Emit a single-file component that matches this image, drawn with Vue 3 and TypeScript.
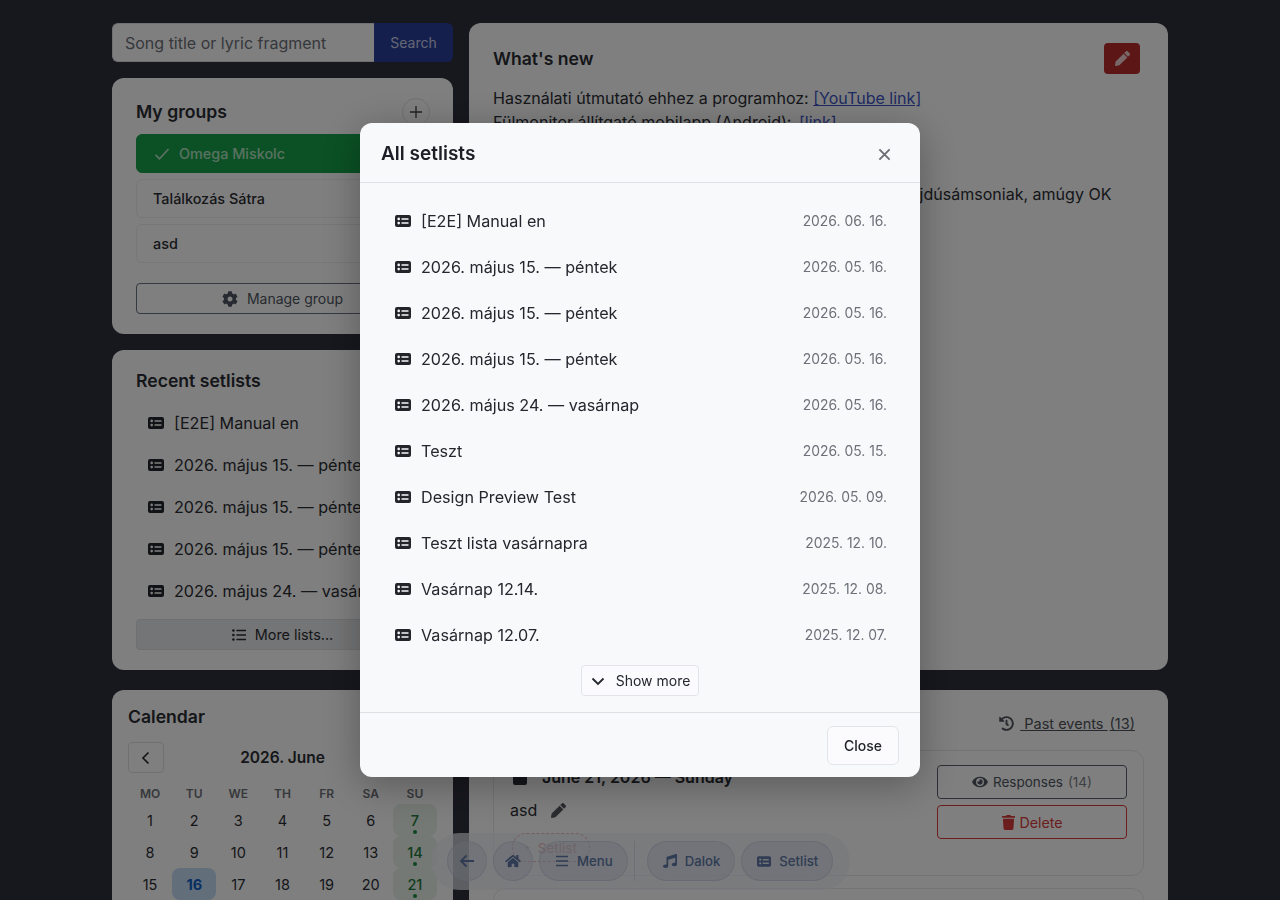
<script setup lang="ts">
const p = {
  pencil: 'M497.9 142.1l-46.1 46.1c-4.7 4.7-12.3 4.7-17 0l-111-111c-4.7-4.7-4.7-12.3 0-17l46.1-46.1c18.7-18.7 49.1-18.7 67.9 0l60.1 60.1c18.8 18.7 18.8 49.1 0 67.9zM284.2 99.8L21.6 362.4.4 483.9c-2.9 16.4 11.4 30.6 27.8 27.8l121.5-21.3 262.6-262.6c4.7-4.7 4.7-12.3 0-17l-111-111c-4.8-4.7-12.4-4.7-17.1 0z',
  cog: 'M487.4 315.7l-42.6-24.6c4.3-23.2 4.3-47 0-70.2l42.6-24.6c4.9-2.8 7.1-8.6 5.5-14-11.1-35.6-30-67.8-54.7-94.6-3.8-4.1-10-5.1-14.8-2.3L380.8 110c-17.9-15.4-38.5-27.3-60.8-35.1V25.8c0-5.6-3.9-10.5-9.4-11.7-36.7-8.2-74.3-7.8-109.2 0-5.5 1.2-9.4 6.1-9.4 11.7V75c-22.2 7.9-42.8 19.8-60.8 35.1L88.7 85.5c-4.9-2.8-11-1.9-14.8 2.3-24.7 26.7-43.6 58.9-54.7 94.6-1.7 5.4.6 11.2 5.5 14L67.3 221c-4.3 23.2-4.3 47 0 70.2l-42.6 24.6c-4.9 2.8-7.1 8.6-5.5 14 11.1 35.6 30 67.8 54.7 94.6 3.8 4.1 10 5.1 14.8 2.3l42.6-24.6c17.9 15.4 38.5 27.3 60.8 35.1v49.2c0 5.6 3.9 10.5 9.4 11.7 36.7 8.2 74.3 7.8 109.2 0 5.5-1.2 9.4-6.1 9.4-11.7v-49.2c22.2-7.9 42.8-19.8 60.8-35.1l42.6 24.6c4.9 2.8 11 1.9 14.8-2.3 24.7-26.7 43.6-58.9 54.7-94.6 1.5-5.5-.7-11.3-5.6-14.1zM256 336c-44.1 0-80-35.9-80-80s35.9-80 80-80 80 35.9 80 80-35.9 80-80 80z',
  home: 'M280.37 148.26L96 300.11V464a16 16 0 0 0 16 16l112.06-.29a16 16 0 0 0 15.92-16V368a16 16 0 0 1 16-16h64a16 16 0 0 1 16 16v95.64a16 16 0 0 0 16 16.05L464 480a16 16 0 0 0 16-16V300L295.67 148.26a12.19 12.19 0 0 0-15.3 0zM571.6 251.47L488 182.56V44.05a12 12 0 0 0-12-12h-56a12 12 0 0 0-12 12v72.61L318.47 43a48 48 0 0 0-61 0L4.34 251.47a12 12 0 0 0-1.6 16.9l25.5 31A12 12 0 0 0 45.15 301l235.22-193.74a12.19 12.19 0 0 1 15.3 0L530.9 301a12 12 0 0 0 16.9-1.6l25.5-31a12 12 0 0 0-1.7-16.93z',
  music: 'M470.38 1.51L150.41 96A32 32 0 0 0 128 126.51v261.41A139 139 0 0 0 96 384c-53 0-96 28.66-96 64s43 64 96 64 96-28.66 96-64V214.32l256-75v184.61a138.4 138.4 0 0 0-32-3.93c-53 0-96 28.66-96 64s43 64 96 64 96-28.65 96-64V32a32 32 0 0 0-41.62-30.49z',
  eye: 'M572.52 241.4C518.29 135.59 410.93 64 288 64S57.68 135.64 3.48 241.41a32.35 32.35 0 0 0 0 29.19C57.71 376.41 165.07 448 288 448s230.32-71.64 284.52-177.41a32.35 32.35 0 0 0 0-29.19zM288 400a144 144 0 1 1 144-144 143.93 143.93 0 0 1-144 144zm0-240a95.31 95.31 0 0 0-25.31 3.79 47.85 47.85 0 0 1-66.9 66.9A95.78 95.78 0 1 0 288 160z',
  trash: 'M432 32H312l-9.4-18.7A24 24 0 0 0 281.1 0H166.8a23.72 23.72 0 0 0-21.4 13.3L136 32H16A16 16 0 0 0 0 48v32a16 16 0 0 0 16 16h416a16 16 0 0 0 16-16V48a16 16 0 0 0-16-16zM53.2 467a48 48 0 0 0 47.9 45h245.8a48 48 0 0 0 47.9-45L416 128H32z',
  history: 'M504 255.531c.253 136.64-111.18 248.372-247.82 248.468-59.015.042-113.223-20.53-155.822-54.911-11.077-8.94-11.905-25.541-1.839-35.607l11.267-11.267c8.609-8.609 22.353-9.551 31.891-1.984C173.062 425.135 212.781 440 256 440c101.705 0 184-82.311 184-184 0-101.705-82.311-184-184-184-48.814 0-93.149 18.969-126.068 49.932l50.754 50.754c10.08 10.08 2.941 27.314-11.313 27.314H24c-8.837 0-16-7.163-16-16V38.627c0-14.254 17.234-21.393 27.314-11.314l49.372 49.372C129.209 34.136 189.552 8 256 8c136.81 0 247.747 110.78 248 247.531zm-180.912 78.784l9.823-12.63c8.138-10.463 6.253-25.542-4.21-33.679L288 256.349V152c0-13.255-10.745-24-24-24h-16c-13.255 0-24 10.745-24 24v135.651l65.409 50.874c10.463 8.137 25.541 6.253 33.679-4.21z',
  card: 'M2 0h12a2 2 0 0 1 2 2v8a2 2 0 0 1-2 2H2a2 2 0 0 1-2-2V2a2 2 0 0 1 2-2zM3.7 2.600a1.300 1.300 0 1 0 0 2.600 1.300 1.300 0 0 0 0-2.600zm0 4.200a1.300 1.300 0 1 0 0 2.600 1.300 1.300 0 0 0 0-2.600zM6.500 3.200v1.600h7V3.200zm0 4V8.800h7V7.200z',
}

const recent = ['[E2E] Manual en', '2026. május 15. — péntek', '2026. május 15. — péntek', '2026. május 15. — péntek', '2026. május 24. — vasárnap']

const setlists = [
  { name: '[E2E] Manual en', date: '2026. 06. 16.' },
  { name: '2026. május 15. — péntek', date: '2026. 05. 16.' },
  { name: '2026. május 15. — péntek', date: '2026. 05. 16.' },
  { name: '2026. május 15. — péntek', date: '2026. 05. 16.' },
  { name: '2026. május 24. — vasárnap', date: '2026. 05. 16.' },
  { name: 'Teszt', date: '2026. 05. 15.' },
  { name: 'Design Preview Test', date: '2026. 05. 09.' },
  { name: 'Teszt lista vasárnapra', date: '2025. 12. 10.' },
  { name: 'Vasárnap 12.14.', date: '2025. 12. 08.' },
  { name: 'Vasárnap 12.07.', date: '2025. 12. 07.' },
]

const weekdays = ['MO', 'TU', 'WE', 'TH', 'FR', 'SA', 'SU']
const days = Array.from({ length: 21 }, (_, i) => i + 1)
</script>

<template>
  <div class="page">
    <div class="layout">
      <aside class="col">
        <form class="search" @submit.prevent>
          <input class="search-input" placeholder="Song title or lyric fragment" />
          <button class="search-btn">Search</button>
        </form>

        <section class="card groups">
          <div class="groups-head">
            <h2>My groups</h2>
            <span class="round-plus">
              <svg width="14" height="14" viewBox="0 0 14 14"><path d="M7 1v12M1 7h12" stroke="currentColor" stroke-width="1.300" /></svg>
            </span>
          </div>
          <div class="group active">
            <svg width="18" height="18" viewBox="0 0 18 18" fill="none"><path d="M2.500 9.800l4 4L15.500 4" stroke="currentColor" stroke-width="1.700" /></svg>
            <span>Omega Miskolc</span>
          </div>
          <div class="group">Találkozás Sátra</div>
          <div class="group">asd</div>
          <button class="manage">
            <svg width="16" height="16" viewBox="0 0 512 512" fill="currentColor"><path :d="p.cog" /></svg>
            Manage group
          </button>
        </section>

        <section class="card recent">
          <h2>Recent setlists</h2>
          <div v-for="(r, i) in recent" :key="i" class="recent-row">
            <svg class="ic-card" viewBox="0 0 16 12" fill="currentColor"><path fill-rule="evenodd" :d="p.card" /></svg>
            <span>{{ r }}</span>
          </div>
          <button class="more">
            <svg width="14" height="14" viewBox="0 0 14 14" fill="currentColor"><circle cx="1.400" cy="2.500" r="1.300" /><circle cx="1.400" cy="7" r="1.300" /><circle cx="1.400" cy="11.500" r="1.300" /><path d="M4.400 1.800H14v1.400H4.400zM4.400 6.300H14v1.400H4.400zM4.400 10.800H14v1.400H4.400z" /></svg>
            More lists...
          </button>
        </section>

        <section class="card calendar">
          <h2>Calendar</h2>
          <div class="cal-head">
            <button class="cal-prev">
              <svg width="16" height="16" viewBox="0 0 16 16" fill="none"><path d="M10.500 2.500L5 8l5.500 5.500" stroke="currentColor" stroke-width="1.700" /></svg>
            </button>
            <strong>2026. June</strong>
            <span class="cal-prev-spacer"></span>
          </div>
          <div class="cal-grid">
            <span v-for="w in weekdays" :key="w" class="wd">{{ w }}</span>
            <span v-for="d in days" :key="d" class="day" :class="{ sun: d % 7 === 0, today: d === 16 }">{{ d }}<i v-if="d % 7 === 0"></i></span>
          </div>
        </section>
      </aside>

      <main class="col">
        <section class="card news">
          <div class="news-head">
            <h2>What's new</h2>
            <button class="edit">
              <svg width="15" height="15" viewBox="0 0 512 512" fill="currentColor"><path :d="p.pencil" /></svg>
            </button>
          </div>
          <p>
            Használati útmutató ehhez a programhoz: <a>[YouTube link]</a><br />
            Fülmonitor állítgató mobilapp (Android): <a class="link-2">[link]</a><br />
            <br />
            <br />
            Köszönet a sok visszajelzésért, a zenekarnak, főleg a hajdúsámsoniak, amúgy OK
          </p>
        </section>

        <section class="card events">
          <div class="events-head">
            <a class="past">
              <svg width="15" height="15" viewBox="0 0 512 512" fill="currentColor"><path :d="p.history" /></svg>
              <span class="past-label">&nbsp;Past events&nbsp;</span>
              <span class="past-count">(13)</span>
            </a>
          </div>
          <article class="event">
            <div class="event-main">
              <div class="event-title">
                <svg width="14" height="16" viewBox="0 0 14 16" fill="currentColor"><rect y="1" width="14" height="15" rx="2" /></svg>
                <strong>June 21, 2026 — Sunday</strong>
              </div>
              <div class="event-note">
                asd
                <svg width="15" height="15" viewBox="0 0 512 512" fill="currentColor"><path :d="p.pencil" /></svg>
              </div>
              <span class="add-setlist"><svg width="13" height="13" viewBox="0 0 13 13"><path d="M6.500 0v13M0 6.500h13" stroke="currentColor" stroke-width="1.200" /></svg>Setlist</span>
            </div>
            <div class="event-side">
              <button class="resp">
                <svg width="16" height="14" viewBox="0 0 576 512" fill="currentColor"><path :d="p.eye" /></svg>
                Responses <em>(14)</em>
              </button>
              <button class="del">
                <svg width="13" height="15" viewBox="0 0 448 512" fill="currentColor"><path :d="p.trash" /></svg>
                Delete
              </button>
            </div>
          </article>
          <article class="event"></article>
        </section>
      </main>
    </div>

    <nav class="dock">
      <button class="dock-btn circle"><svg width="16" height="14" viewBox="0 0 16 14" fill="none"><path d="M15 7H2M7.500 1.500L2 7l5.500 5.500" stroke="currentColor" stroke-width="1.800" /></svg></button>
      <button class="dock-btn circle"><svg width="16" height="14" viewBox="0 0 576 512" fill="currentColor"><path :d="p.home" /></svg></button>
      <button class="dock-btn"><svg width="14" height="12" viewBox="0 0 14 12" fill="currentColor"><path d="M1 .800h12v1.400H1zM1 5.300h12v1.400H1zM1 9.800h12v1.400H1z" /></svg>Menu</button>
      <span class="dock-sep"></span>
      <button class="dock-btn"><svg width="14" height="14" viewBox="0 0 512 512" fill="currentColor"><path :d="p.music" /></svg>Dalok</button>
      <button class="dock-btn"><svg width="14" height="11" viewBox="0 0 16 12" fill="currentColor"><path fill-rule="evenodd" :d="p.card" /></svg>Setlist</button>
    </nav>

    <div class="backdrop">
      <div class="modal">
        <header class="modal-head">
          <h3>All setlists</h3>
          <button class="close-x" aria-label="Close">
            <svg width="13" height="13" viewBox="0 0 14 14" fill="none"><path d="M1.500 1.500l11 11M12.500 1.500l-11 11" stroke="currentColor" stroke-width="2" /></svg>
          </button>
        </header>
        <div class="modal-body">
          <div class="list">
            <div v-for="(s, i) in setlists" :key="i" class="row">
              <svg class="ic-card" viewBox="0 0 16 12" fill="currentColor"><path fill-rule="evenodd" :d="p.card" /></svg>
              <span class="row-name">{{ s.name }}</span>
              <span class="row-date">{{ s.date }}</span>
            </div>
          </div>
          <button class="show-more">
            <svg width="16" height="16" viewBox="0 0 16 16" fill="none"><path d="M2.500 5.500L8 11l5.500-5.500" stroke="currentColor" stroke-width="1.800" /></svg>
            Show more
          </button>
        </div>
        <footer class="modal-foot">
          <button class="close-btn">Close</button>
        </footer>
      </div>
    </div>
  </div>
</template>

<style>
html, body { margin: 0; background: #2f303d; overflow: hidden; }
</style>

<style scoped>
* { box-sizing: border-box; }
button, input { font-family: inherit; }
.page { position: relative; height: 900px; overflow: hidden; background: #2f303d; font-family: Inter, "Liberation Sans", sans-serif; color: #2b2d33; }
.layout { width: 1056px; margin: 0 auto; padding-top: 23px; display: grid; grid-template-columns: 341px 699px; gap: 16px; }
.col { display: flex; flex-direction: column; }
h2 { margin: 0; font-size: 17.600px; font-weight: 600; color: #2a2c33; }
.card { background: #fff; border-radius: 12px; }

.search { display: flex; height: 39px; margin-bottom: 16px; }
.search-input { flex: 1; min-width: 0; border: 1px solid #e0e0e4; border-right: 0; border-radius: 6px 0 0 6px; background: #fff; padding: 0 12px; font-size: 16px; }
.search-input::placeholder { color: #6c7078; }
.search-btn { width: 79px; border: 0; border-radius: 0 6px 6px 0; background: #2a3f9c; color: #c9cfe8; font-size: 14px; }

.groups { height: 256px; padding: 24px; margin-bottom: 16px; }
.groups-head { display: flex; justify-content: space-between; align-items: center; height: 32px; margin-bottom: 6px; margin-right: -1px; margin-top: -6px; }
.groups-head h2 { margin-top: -1px; }
.round-plus { width: 28px; height: 28px; border: 1px solid #e3e3e6; border-radius: 50%; display: flex; align-items: center; justify-content: center; color: #40434a; }
.group { height: 39px; margin-bottom: 6px; padding: 0 16px; border: 1px solid #eceef0; border-radius: 6px; display: flex; align-items: center; font-size: 14.400px; font-weight: 500; color: #2b2d33; }
.group.active { background: #16a34a; border-color: #16a34a; color: #b4e2c2; padding-left: 16px; gap: 8px; }
.manage { width: 100%; height: 31px; margin-top: 20px; background: transparent; border: 1px solid #6a7280; border-radius: 4px; color: #4e5560; font-size: 14px; display: flex; align-items: center; justify-content: center; gap: 9px; }

.recent { height: 320px; padding: 20px 24px 20px; margin-bottom: 20px; }
.recent h2 { margin-bottom: 11px; font-weight: 600; }
.recent-row { height: 42px; display: flex; align-items: center; gap: 10px; padding-left: 12px; font-size: 16.160px; color: #2b2d33; white-space: nowrap; overflow: hidden; }
.ic-card { width: 16px; height: 12px; flex: none; color: #22242a; }
.more { width: 100%; height: 31px; margin-top: 7px; background: #e9eaec; border: 1px solid #dfe0e3; border-radius: 4px; font-size: 14.400px; color: #2b2d33; display: flex; align-items: center; justify-content: center; gap: 9px; }

.calendar { padding: 16px; flex: 1; min-height: 260px; border-radius: 12px 12px 0 0; }
.cal-head { display: flex; justify-content: space-between; align-items: center; margin: 15px 0 9px; }
.cal-head strong { font-size: 15.500px; font-weight: 600; }
.cal-prev { width: 36px; height: 31px; background: transparent; border: 1px solid #e0e1e4; border-radius: 4px; display: flex; align-items: center; justify-content: center; color: #2b2d33; padding: 0; }
.cal-prev-spacer { width: 36px; }
.cal-grid { display: grid; grid-template-columns: repeat(7, 1fr); grid-template-rows: 22px; grid-auto-rows: 32px; }
.wd { display: flex; align-items: center; justify-content: center; font-size: 12px; font-weight: 600; color: #6e7178; }
.day { position: relative; display: flex; align-items: center; justify-content: center; font-size: 14.500px; color: #2b2d33; }
.day.sun { background: #e8f3ea; color: #1f7a3d; font-weight: 500; border-radius: 8px; }
.day.sun i { position: absolute; bottom: 2px; width: 4px; height: 4px; border-radius: 50%; background: #1f8a45; }
.day.today { background: #c5dcf5; color: #0f5fc0; font-weight: 700; border-radius: 8px; }

.news { height: 647px; padding: 20px 28px 0 24px; margin-bottom: 20px; }
.news-head { display: flex; justify-content: space-between; align-items: center; height: 31px; margin-bottom: 12px; }
.edit { width: 36px; height: 31px; border: 0; border-radius: 4px; background: #bb2d2d; color: #f0d0d0; display: flex; align-items: center; justify-content: center; padding: 0; }
.news p { margin: 0; font-size: 16.050px; line-height: 24px; color: #2b2d33; }
.news a { color: #3d56c4; text-decoration: underline; }
.news .link-2 { margin-left: 3px; }

.events { flex: 1; padding: 0 24px; border-radius: 12px 12px 0 0; min-height: 300px; }
.events-head { display: flex; justify-content: flex-end; height: 60px; align-items: center; padding-right: 9px; padding-top: 7px; }
.past { display: flex; align-items: center; color: #4f535b; font-size: 14.500px; }
.past svg { margin-right: 6px; }
.past-label { text-decoration: underline; }
.past-count { text-decoration: underline; margin-left: 2px; }
.event { border: 1px solid #e6e7ea; border-radius: 12px; height: 126px; margin-bottom: 12px; padding: 14px 16px 0; display: flex; justify-content: space-between; }
.event-main { padding-left: 2px; }
.event-title { display: flex; align-items: center; gap: 15px; height: 24px; margin-bottom: 2px; margin-left: 1px; }
.event-title strong { font-size: 16px; font-weight: 600; }
.event-note { display: flex; align-items: center; gap: 14px; font-size: 16px; height: 30px; margin-top: 6px; margin-left: -2px; color: #2b2d33; }
.event-note svg { color: #55585f; }
.add-setlist { display: inline-flex; align-items: center; gap: 8px; width: 78px; height: 29px; margin-top: 8px; padding: 0 12px; border: 1px dashed #e03030; border-radius: 16px; color: #e03030; font-size: 13.600px; white-space: nowrap; }
.event-side { width: 190px; display: flex; flex-direction: column; gap: 6px; }
.event-side button { height: 34px; border-radius: 4px; background: transparent; display: flex; align-items: center; justify-content: center; gap: 5px; }
.resp { border: 1px solid #5a626e; color: #4e5560; font-size: 13.500px; }
.resp em { font-style: normal; color: #7a7f87; }
.del { border: 1px solid #d83a3a; color: #d83a3a; font-size: 14.200px; }

.dock { position: absolute; left: 431px; top: 833px; width: 419px; height: 57px; padding: 8px 16px; border-radius: 29px; background: rgba(240, 242, 248, .72); display: flex; align-items: flex-start; gap: 6px; }
.dock-btn { flex: none; height: 40px; padding: 0 14px 0 15px; border-radius: 20px; border: 1px solid rgba(190, 200, 220, .5); background: rgba(205, 213, 230, .4); color: #5e78a6; font-size: 13.200px; font-weight: 500; display: flex; align-items: center; gap: 8px; white-space: nowrap; }
.dock-btn.circle { width: 40px; padding: 0; justify-content: center; }
.dock-sep { flex: none; width: 1px; height: 40px; background: #dcdfe6; margin-right: 6px; }

.backdrop { position: fixed; inset: 0; background: rgba(0, 0, 0, .5); display: flex; align-items: center; justify-content: center; }
.modal { width: 560px; height: 654px; background: #f8f9fb; border-radius: 12px; box-shadow: 0 8px 40px rgba(0, 0, 0, .3); display: flex; flex-direction: column; color: #21242b; }
.modal-head { height: 60px; flex: none; padding: 2px 21px 0; border-bottom: 1px solid #dee0e3; display: flex; align-items: center; justify-content: space-between; }
.modal-head h3 { margin: 0; font-size: 19px; font-weight: 600; color: #1c1f26; }
.close-x { border: 0; background: transparent; color: #6a6d73; display: flex; padding: 0; margin-right: 8px; margin-top: 1px; }
.modal-body { flex: 1; padding: 15px 21px 0; display: flex; flex-direction: column; align-items: center; border-bottom: 1px solid #dee0e3; }
.list { width: 100%; }
.row { height: 46px; display: flex; align-items: center; gap: 10px; padding: 0 12px 0 14px; font-size: 16.160px; }
.row-name { flex: 1; color: #24272e; }
.row-date { font-size: 13.900px; color: #6c7078; }
.show-more { margin-top: 7px; height: 31px; width: 118px; border: 1px solid #e3e5e8; border-radius: 4px; background: #fbfbfd; color: #24272e; font-size: 14px; display: flex; align-items: center; justify-content: center; gap: 10px; padding: 0; }
.modal-foot { height: 64px; flex: none; padding: 0 21px; display: flex; align-items: center; justify-content: flex-end; }
.close-btn { width: 72px; height: 39px; border: 1px solid #e3e5e8; border-radius: 6px; background: #fbfbfd; color: #21242b; font-size: 14px; font-weight: 500; }
</style>
